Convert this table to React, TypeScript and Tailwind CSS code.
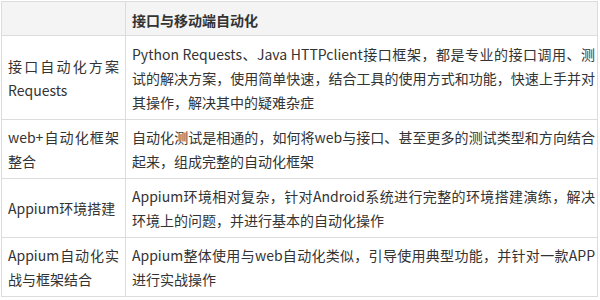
const rows: { name: string; desc: string }[] = [
  {
    name: "接口自动化方案Requests",
    desc: "Python Requests、Java HTTPclient接口框架，都是专业的接口调用、测试的解决方案，使用简单快速，结合工具的使用方式和功能，快速上手并对其操作，解决其中的疑难杂症",
  },
  {
    name: "web+自动化框架整合",
    desc: "自动化测试是相通的，如何将web与接口、甚至更多的测试类型和方向结合起来，组成完整的自动化框架",
  },
  {
    name: "Appium环境搭建",
    desc: "Appium环境相对复杂，针对Android系统进行完整的环境搭建演练，解决环境上的问题，并进行基本的自动化操作",
  },
  {
    name: "Appium自动化实战与框架结合",
    desc: "Appium整体使用与web自动化类似，引导使用典型功能，并针对一款APP进行实战操作",
  },
];

const font = { fontFamily: '"Noto Sans CJK SC", "Microsoft YaHei", sans-serif' };

export default function App() {
  return (
    <div className="bg-white p-px" style={font}>
      <table className="w-[597px] table-fixed border-collapse border border-[#dcdcdc] text-[14px] leading-6 text-[#333]">
        <colgroup>
          <col className="w-[124px]" />
          <col />
        </colgroup>
        <thead>
          <tr className="h-[34px] bg-[#f4f4f4]">
            <th className="border border-[#dcdcdc] px-[6px]" />
            <th className="border border-[#dcdcdc] px-[6px] pt-[2px] text-left font-bold">接口与移动端自动化</th>
          </tr>
        </thead>
        <tbody>
          {rows.map((r, i) => (
            <tr key={i} className={i === 0 ? "h-[84px]" : i === 3 ? "h-[58px]" : "h-[59px]"}>
              <td className="border border-[#dcdcdc] px-[6px] py-[5px] text-justify align-middle break-words">{r.name}</td>
              <td className="border border-[#dcdcdc] py-[5px] pl-[6px] pr-[2px] text-justify align-middle break-words">{r.desc}</td>
            </tr>
          ))}
        </tbody>
      </table>
    </div>
  );
}
